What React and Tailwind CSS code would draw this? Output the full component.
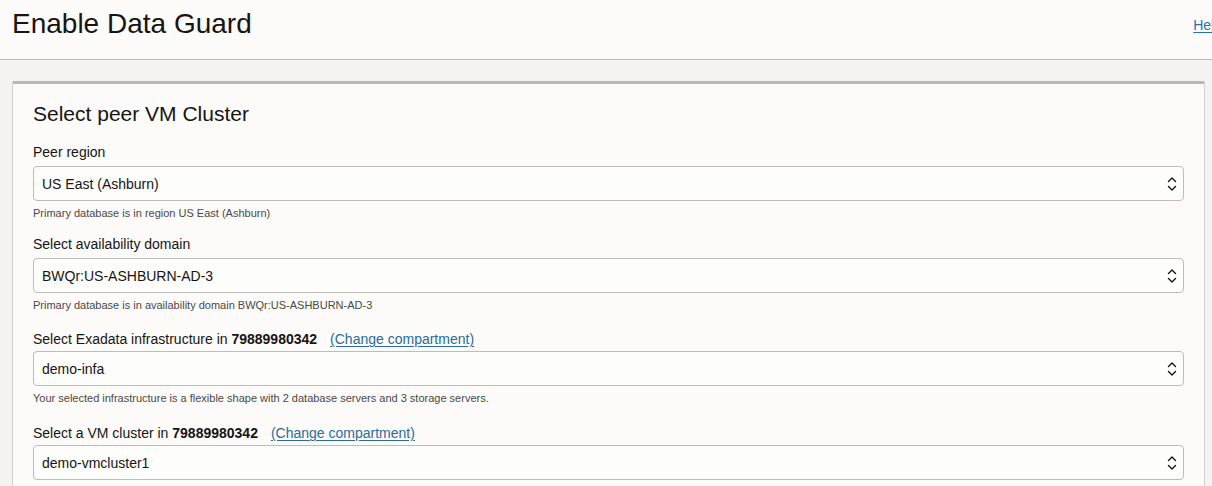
import React from 'react'

function Chevrons() {
  return (
    <svg width="10" height="16" viewBox="0 0 10 16" fill="none" stroke="#161513" strokeWidth="1.4" strokeLinecap="round" strokeLinejoin="round">
      <path d="M1.5 5.5 L5 2 L8.5 5.5" />
      <path d="M1.5 10.5 L5 14 L8.5 10.5" />
    </svg>
  )
}

function Select({ value }) {
  return (
    <div className="flex items-center h-[35px] border border-[#bfbbb6] rounded-[4px] bg-[#fdfdfc] pl-[8px] pr-[6px]">
      <span className="flex-1 text-[14px] text-[#161513] leading-5">{value}</span>
      <Chevrons />
    </div>
  )
}

function Field({ label, value, help, className = 'mt-[13px]', gap = 'mt-[4px]' }) {
  return (
    <div className={className}>
      <div className="text-[14px] leading-5 text-[#161513]">{label}</div>
      <div className={gap}>
        <Select value={value} />
      </div>
      {help && <div className="mt-[4px] text-[11px] leading-4 text-[#4b4845]">{help}</div>}
    </div>
  )
}

const Link = ({ children }) => (
  <a href="#" className="ml-[13px] text-[#2a6b9a] underline underline-offset-2">{children}</a>
)

export default function App() {
  return (
    <div className="w-[1212px] h-[486px] overflow-hidden bg-[#f4f3f1]" style={{ fontFamily: '"Liberation Sans", Arial, sans-serif' }}>
      <header className="flex items-start h-[60px] bg-[#fcfbfa] border-b border-[#bcb8b4] pl-[12px]">
        <h1 className="text-[28px] leading-8 text-[#161513] mt-[8px]">Enable Data Guard</h1>
        <a href="#" className="ml-auto mr-[-10px] mt-[15px] text-[14px] text-[#1f74a8] underline underline-offset-2">Help</a>
      </header>
      <div className="ml-[12px] mr-[7px] mt-[21px] bg-[#fcfbfa] border border-[#d3cfcb] border-t-[3px] border-t-[#bab6b1] rounded-t-[2px] px-[20px] pt-[16px] pb-[20px]">
        <h2 className="text-[21px] leading-7 text-[#161513]">Select peer VM Cluster</h2>
        <div className="h-[1px]" />
        <Field
          label="Peer region"
          value="US East (Ashburn)"
          help="Primary database is in region US East (Ashburn)"
        />
        <Field
          label="Select availability domain"
          value="BWQr:US-ASHBURN-AD-3"
          help="Primary database is in availability domain BWQr:US-ASHBURN-AD-3"
        />
        <Field
          className="mt-[16px]"
          gap="mt-[2px]"
          label={<>Select Exadata infrastructure in <b>79889980342</b><Link>(Change compartment)</Link></>}
          value="demo-infa"
          help="Your selected infrastructure is a flexible shape with 2 database servers and 3 storage servers."
        />
        <Field
          className="mt-[17px]"
          gap="mt-[2px]"
          label={<>Select a VM cluster in <b>79889980342</b><Link>(Change compartment)</Link></>}
          value="demo-vmcluster1"
        />
      </div>
    </div>
  )
}
